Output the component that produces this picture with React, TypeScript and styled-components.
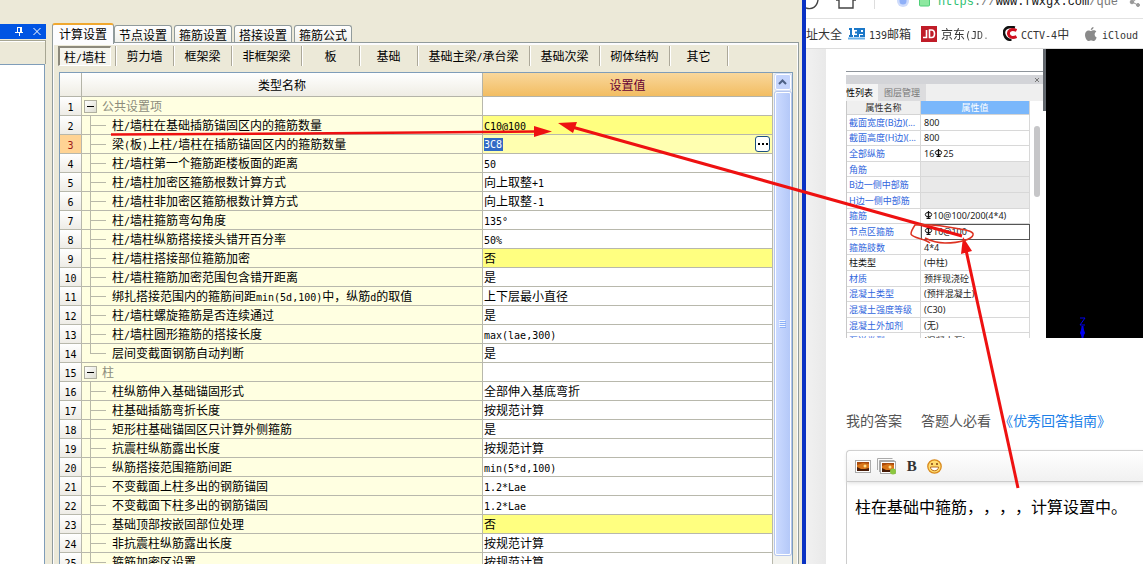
import React from "react";
import styled, { createGlobalStyle, css } from "styled-components";

const GlobalStyle = createGlobalStyle`
  * { box-sizing: border-box; }
  html, body { margin: 0; height: 100%; }
  body {
    overflow: hidden;
    background: #fff;
    color: #000;
    font: 12px/18px "Noto Sans CJK SC", sans-serif;
    text-spacing-trim: space-all;
  }
  button, input { font: inherit; color: inherit; margin: 0; padding: 0; border: 0; background: none; }
  table { border-collapse: separate; border-spacing: 0; }
  th, td { padding: 0; font-weight: 400; text-align: left; }
  svg { display: block; }
`;

const Desktop = styled.div`
  position: relative;
  display: grid;
  grid-template-columns: minmax(0, 806fr) minmax(0, 337fr);
  height: 100vh;
  overflow: hidden;
`;

/* ---------- half-width characters next to Chinese text ---------- */

const Half = styled.span`
  font-family: "DejaVu Sans Mono", monospace;
  font-size: 10px;
  line-height: 10px;
`;

const Mixed = ({ text }: { text: string }) => (
  <>
    {text.split(/([\x21-\x7e°]+)/).map((part, i) =>
      i % 2 ? <Half key={i}>{part}</Half> : part
    )}
  </>
);

/* ---------- settings window ---------- */

const SettingsWindow = styled.main`
  display: flex;
  gap: 6px;
  min-width: 0;
  overflow: hidden;
  background: #ece9d8;
  border-right: 4px solid #0a32c4;
`;

const Dock = styled.aside`
  display: flex;
  flex-direction: column;
  width: 46px;
  flex: none;
  padding-top: 24px;
`;

const DockTitle = styled.div`
  display: flex;
  align-items: center;
  justify-content: flex-end;
  gap: 10px;
  height: 15px;
  padding-right: 5px;
  background: #0054e3;
`;

const DockButton = styled.button`
  display: block;
  width: 8px;
  height: 9px;
`;

const DockBar = styled.div`
  height: 24px;
  margin-top: 1px;
  border: solid #a7a693;
  border-width: 1px 1px 0 0;
  box-shadow: inset 0 1px 0 #fff;
`;

const DockBody = styled.div`
  flex: 1;
  margin-right: 1px;
  background: #fff;
  border: solid #7f9db9;
  border-width: 1px 1px 0 0;
`;

const Main = styled.section`
  display: flex;
  flex-direction: column;
  flex: 1;
  min-width: 0;
  padding: 23px 3px 0 0;
`;

const TabRow = styled.div`
  display: flex;
  align-items: flex-end;
  gap: 2px;
  height: 19px;
`;

const Tab = styled.button<{ $active?: boolean }>`
  position: relative;
  width: 58px;
  height: 17px;
  line-height: 17px;
  white-space: nowrap;
  border: 1px solid #919b9c;
  border-bottom: 0;
  border-radius: 3px 3px 0 0;
  background: linear-gradient(#fff, #f0f0ea);
  ${(p) =>
    p.$active &&
    css`
      width: 62px;
      height: 21px;
      margin: 0 -2px -2px 0;
      padding-bottom: 4px;
      z-index: 1;
      border-top: 2px solid #f0a830;
      background: #fcfcfe;
    `}
`;

const Panel = styled.div`
  display: flex;
  flex-direction: column;
  flex: 1;
  min-height: 0;
  padding: 3px 5px 0;
  border: 1px solid #919b9c;
  border-bottom: 0;
  box-shadow: inset 1px 2px 0 #fcfcfe, inset -1px 0 0 #fcfcfe;
`;

const SubTabs = styled.div`
  display: flex;
  height: 20px;
  margin-bottom: 6px;
`;

const SubTab = styled.button<{ $w: number; $pressed?: boolean }>`
  width: ${(p) => p.$w}px;
  height: 20px;
  line-height: 20px;
  white-space: nowrap;
  border-right: 1px solid #aca899;
  box-shadow: 1px 0 0 #fff;
  ${(p) =>
    p.$pressed &&
    css`
      border: 1px solid #fff;
      border-top: 2px solid #8c897c;
      border-left: 2px solid #8c897c;
      line-height: 18px;
      background: #f6f5ee;
      box-shadow: none;
    `}
`;

const SubTabDivider = styled.span`
  width: 5px;
  border-right: 1px solid #aca899;
  box-shadow: 1px 0 0 #fff;
`;

const GridFrame = styled.div`
  display: flex;
  flex: 1;
  min-height: 0;
  overflow: hidden;
  margin: 0 0 0 1px;
  border: 1px solid #7f9db9;
  border-bottom: 0;
  background: #fff;
`;

const SettingsTable = styled.table`
  flex: 1;
  min-width: 0;
  table-layout: fixed;
  align-self: flex-start;
`;

const HeadCell = styled.th<{ $value?: boolean }>`
  height: 24px;
  text-align: center;
  border-right: 1px solid #b4b4a8;
  border-bottom: 1px solid #b4b4a8;
  background: linear-gradient(#fff, #efede4);
  ${(p) =>
    p.$value &&
    css`
      color: #660033;
      background: linear-gradient(#f9d79b, #f2bd62);
    `}
`;

const NumberCell = styled.th<{ $current?: boolean }>`
  height: 19px;
  text-align: center;
  border-right: 1px solid #b8b8ac;
  border-bottom: 1px solid #b8b8ac;
  background: linear-gradient(#fff, #eeece6);
  ${(p) =>
    p.$current &&
    css`
      color: #a01818;
      background: #ffd394;
    `}
`;

const NameCell = styled.td`
  height: 19px;
  overflow: hidden;
  white-space: nowrap;
  background: #ffffe1;
  border-right: 1px solid #b8b8ac;
  border-bottom: 1px solid #b8b8ac;
`;

const tones = { plain: "#fff", changed: "#ffff80", editing: "#ffffb0" };

const ValueCell = styled.td<{ $tone: keyof typeof tones }>`
  height: 19px;
  padding: 0 2px 0 1px;
  white-space: nowrap;
  background: ${(p) => tones[p.$tone]};
  border-right: 1px solid #b8b8ac;
  border-bottom: 1px solid #b8b8ac;
`;

const TreeItem = styled.div<{ $group?: boolean }>`
  display: flex;
  align-items: center;
  height: 18px;
  color: ${(p) => (p.$group ? "#8c8c7c" : "#000")};
`;

const Branch = styled.span<{ $last?: boolean }>`
  width: 30px;
  height: 18px;
  flex: none;
  background:
    linear-gradient(#b8b8a8, #b8b8a8) 8px 0 / 1px ${(p) => (p.$last ? "10px" : "18px")} no-repeat,
    linear-gradient(#b8b8a8, #b8b8a8) 8px 9px / 16px 1px no-repeat;
`;

const Toggle = styled.button`
  display: grid;
  place-items: center;
  width: 13px;
  height: 13px;
  margin: 0 5px 0 2px;
  border: 1px solid #b0b0a0;
  background: linear-gradient(135deg, #fff, #dcdcd0);
  &::before { content: ""; width: 7px; height: 1px; background: #000; }
`;

const Editing = styled.div`
  display: flex;
  align-items: center;
  justify-content: space-between;
  height: 18px;
`;

const EditBox = styled.input`
  width: 19px;
  height: 13px;
  font-family: "DejaVu Sans Mono", monospace;
  font-size: 10px;
  line-height: 13px;
  color: #fff;
  background: #316ac5;
`;

const MoreButton = styled.button`
  display: grid;
  place-items: center;
  width: 15px;
  height: 16px;
  border: 1px solid #1c5180;
  border-radius: 3px;
  background: #fff;
`;

const ScrollBar = styled.div`
  display: flex;
  flex-direction: column;
  align-items: center;
  gap: 2px;
  width: 19px;
  flex: none;
  padding: 1px 1px 0;
  background: #f3f3ee;
`;

const ScrollUp = styled.button`
  display: grid;
  place-items: center;
  width: 16px;
  height: 16px;
  border: 1px solid #fff;
  border-radius: 2px;
  background: #c4d4fc;
  box-shadow: 0 0 0 1px #d4dff8;
`;

const ScrollThumb = styled.div`
  display: grid;
  place-items: center;
  width: 16px;
  height: 463px;
  border: 1px solid #fff;
  border-radius: 2px;
  background: linear-gradient(90deg, #cbdaff, #b4c8f8);
  box-shadow: 0 0 0 1px #b5c6ee;
`;

const tabs = ["计算设置", "节点设置", "箍筋设置", "搭接设置", "箍筋公式"];

const subTabs: [string, number][] = [
  ["柱/墙柱", 53],
  ["剪力墙", 58],
  ["框架梁", 58],
  ["非框架梁", 70],
  ["板", 58],
  ["基础", 58],
  ["基础主梁/承台梁", 112],
  ["基础次梁", 70],
  ["砌体结构", 70],
  ["其它", 58],
];

type Row = { name: string; value?: string; group?: boolean; changed?: boolean; editing?: boolean; last?: boolean };

const rows: Row[] = [
  { name: "公共设置项", group: true },
  { name: "柱/墙柱在基础插筋锚固区内的箍筋数量", value: "C10@100", changed: true },
  { name: "梁(板)上柱/墙柱在插筋锚固区内的箍筋数量", value: "3C8", editing: true },
  { name: "柱/墙柱第一个箍筋距楼板面的距离", value: "50" },
  { name: "柱/墙柱加密区箍筋根数计算方式", value: "向上取整+1" },
  { name: "柱/墙柱非加密区箍筋根数计算方式", value: "向上取整-1" },
  { name: "柱/墙柱箍筋弯勾角度", value: "135°" },
  { name: "柱/墙柱纵筋搭接接头错开百分率", value: "50%" },
  { name: "柱/墙柱搭接部位箍筋加密", value: "否", changed: true },
  { name: "柱/墙柱箍筋加密范围包含错开距离", value: "是" },
  { name: "绑扎搭接范围内的箍筋间距min(5d,100)中，纵筋d的取值", value: "上下层最小直径" },
  { name: "柱/墙柱螺旋箍筋是否连续通过", value: "是" },
  { name: "柱/墙柱圆形箍筋的搭接长度", value: "max(lae,300)" },
  { name: "层间变截面钢筋自动判断", value: "是", last: true },
  { name: "柱", group: true },
  { name: "柱纵筋伸入基础锚固形式", value: "全部伸入基底弯折" },
  { name: "柱基础插筋弯折长度", value: "按规范计算" },
  { name: "矩形柱基础锚固区只计算外侧箍筋", value: "是" },
  { name: "抗震柱纵筋露出长度", value: "按规范计算" },
  { name: "纵筋搭接范围箍筋间距", value: "min(5*d,100)" },
  { name: "不变截面上柱多出的钢筋锚固", value: "1.2*Lae" },
  { name: "不变截面下柱多出的钢筋锚固", value: "1.2*Lae" },
  { name: "基础顶部按嵌固部位处理", value: "否", changed: true },
  { name: "非抗震柱纵筋露出长度", value: "按规范计算" },
  { name: "箍筋加密区设置", value: "按规范计算", last: true },
];

const SettingRow = ({ row, index }: { row: Row; index: number }) => (
  <tr>
    <NumberCell scope="row" $current={row.editing}>
      <Mixed text={String(index)} />
    </NumberCell>
    <NameCell>
      <TreeItem $group={row.group}>
        {row.group ? <Toggle aria-label="折叠" /> : <Branch $last={row.last} />}
        <span><Mixed text={row.name} /></span>
      </TreeItem>
    </NameCell>
    <ValueCell $tone={row.editing ? "editing" : row.changed ? "changed" : "plain"}>
      {row.editing ? (
        <Editing>
          <EditBox aria-label={row.name} defaultValue={row.value} />
          <MoreButton aria-label="更多">
            <svg width="10" height="2" viewBox="0 0 10 2" shapeRendering="crispEdges">
              <path d="M0 0h2v2H0zM4 0h2v2H4zM8 0h2v2H8z" />
            </svg>
          </MoreButton>
        </Editing>
      ) : (
        <Mixed text={row.value ?? ""} />
      )}
    </ValueCell>
  </tr>
);

/* ---------- browser ---------- */

const Browser = styled.section`
  display: flex;
  flex-direction: column;
  min-width: 0;
  overflow: hidden;
  background: #fff;
`;

const AddressBar = styled.div`
  display: flex;
  height: 19px;
  flex: none;
  overflow: hidden;
  border-bottom: 1px solid #e2e2e2;
`;

const AddressIcons = styled.svg`
  flex: none;
  width: 132px;
  height: 18px;
`;

const Url = styled.div`
  flex: 1;
  min-width: 0;
  height: 16px;
  margin-top: -6px;
  overflow: hidden;
  white-space: nowrap;
  color: #777;
  font: 12px/16px "Liberation Mono", monospace;
  b { color: #2fbf71; font-weight: 400; }
  strong { color: #111; font-weight: 400; }
`;

const Bookmarks = styled.nav`
  display: flex;
  align-items: center;
  height: 30px;
  flex: none;
  overflow: hidden;
  border-bottom: 1px solid #dcdcdc;
`;

const Bookmark = styled.a<{ $w: number; $fade?: boolean }>`
  display: flex;
  align-items: center;
  gap: 4px;
  width: ${(p) => p.$w}px;
  flex: none;
  overflow: hidden;
  white-space: nowrap;
  color: #333;
  text-decoration: none;
  ${(p) => p.$fade && css`mask-image: linear-gradient(90deg, #000 70%, transparent 92%);`}
`;

const PageArea = styled.div`
  flex: 1;
  min-height: 0;
  padding-left: 20px;
  background: linear-gradient(90deg, #f1f1f1, #e9e9e9 20px);
`;

const Page = styled.article`
  height: 100%;
  padding-left: 20px;
  background: #fff;
`;

const Shot = styled.div`
  display: flex;
  height: 289px;
  overflow: hidden;
`;

const PropertyPanel = styled.div`
  display: flex;
  flex-direction: column;
  width: 197px;
  flex: none;
  margin-top: 22px;
  border-top: 1px solid #8f959b;
  color: #222;
  font: 9px/13px "Noto Sans", "Noto Sans CJK SC", sans-serif;
`;

const PanelTitle = styled.div`
  display: flex;
  justify-content: flex-end;
  align-items: center;
  height: 9px;
  flex: none;
  margin-top: 3px;
  padding-right: 4px;
  background: #d3d4d8;
`;

const PanelTabs = styled.div`
  display: flex;
  height: 17px;
  flex: none;
  background: #efefef;
`;

const PanelTab = styled.button<{ $active?: boolean }>`
  width: ${(p) => (p.$active ? 32 : 48)}px;
  color: ${(p) => (p.$active ? "#000" : "#777")};
  background: ${(p) => (p.$active ? "#f4f4f4" : "#dcdcde")};
  text-align: left;
  padding-left: ${(p) => (p.$active ? 0 : 6)}px;
  white-space: nowrap;
`;

const PropertyBody = styled.div`
  display: flex;
  gap: 4px;
  flex: none;
`;

const PropertyTable = styled.table`
  width: 184px;
  height: 248px;
  flex: none;
  table-layout: fixed;
  border-left: 1px solid #c8c8c8;
`;

const PropHead = styled.th<{ $value?: boolean }>`
  text-align: center;
  border-right: 1px solid #d4d4d4;
  border-bottom: 1px solid #d4d4d4;
  color: ${(p) => (p.$value ? "#fff" : "#333")};
  background: ${(p) => (p.$value ? "#7ab7fb" : "#efefef")};
`;

const PropName = styled.td<{ $plain?: boolean }>`
  padding-left: 2px;
  white-space: nowrap;
  overflow: hidden;
  color: ${(p) => (p.$plain ? "#111" : "#2f66dd")};
  border-right: 1px solid #d8d8d8;
  border-bottom: 1px solid #d8d8d8;
`;

const PropValue = styled.td<{ $empty?: boolean; $selected?: boolean }>`
  padding-left: 3px;
  white-space: nowrap;
  background: ${(p) => (p.$empty ? "#e9e9e9" : "#fff")};
  border-right: 1px solid #d8d8d8;
  border-bottom: 1px solid #d8d8d8;
  ${(p) => p.$selected && css`outline: 1px solid #555; outline-offset: -1px;`}
`;

const PropScroll = styled.div`
  width: 6px;
  height: 71px;
  margin-top: 25px;
  border-radius: 3px;
  background: #c6c6c8;
`;

const Edge = styled.div`
  width: 3px;
  height: 62px;
  flex: none;
  background: #62676d;
`;

const Viewport = styled.div`
  display: flex;
  align-items: flex-end;
  flex: 1;
  padding-left: 30px;
  background: #000;
`;

const AnswerLinks = styled.div`
  display: flex;
  height: 22px;
  margin-top: 71px;
  color: #555;
  font-size: 14px;
  line-height: 22px;
  white-space: nowrap;
  span { margin-right: 19px; }
  span + span { margin-right: 8px; }
  a { color: #2080e8; text-decoration: none; }
`;

const Editor = styled.div`
  margin-top: 19px;
  height: 160px;
  border: 1px solid #ccc;
  border-right: 0;
  border-radius: 4px 0 0 0;
`;

const Toolbar = styled.div`
  display: flex;
  align-items: center;
  gap: 6px;
  height: 31px;
  padding-left: 8px;
  background: linear-gradient(#fff, #f1f1f1);
  border-bottom: 1px solid #ccc;
  border-radius: 4px 0 0 0;
  box-shadow: 0 1px 4px #ddd;
`;

const ToolButton = styled.button`
  display: grid;
  place-items: center;
  min-width: 16px;
  height: 20px;
  color: #333;
  font: bold 15px/20px "Liberation Serif", serif;
`;

const Answer = styled.textarea`
  display: block;
  width: 100%;
  height: 100px;
  padding: 12px 0 0 8px;
  border: 0;
  outline: 0;
  resize: none;
  overflow: hidden;
  background: none;
  font: 16px/24px "Noto Sans CJK SC", sans-serif;
  text-spacing-trim: space-all;
`;

const Annotations = styled.svg`
  position: absolute;
  top: 0;
  left: 0;
  width: 100%;
  height: 564px;
  pointer-events: none;
`;

const Rebar = styled.svg`
  display: inline-block;
  width: 9px;
  height: 8px;
  vertical-align: 0;
`;

const RebarMark = () => (
  <Rebar viewBox="0 0 9 8" fill="none" stroke="#111">
    <ellipse cx="4.5" cy="3.6" rx="3.2" ry="2.2" />
    <path d="M4.5 0v7M2.5 7.3h4" strokeWidth="1.3" />
  </Rebar>
);

type Prop = { name: string; value?: string; mark?: string; plain?: boolean; selected?: boolean };

const columnProps: Prop[] = [
  { name: "截面宽度(B边)(...", value: "800" },
  { name: "截面高度(H边)(...", value: "800" },
  { name: "全部纵筋", mark: "16", value: "25" },
  { name: "角筋" },
  { name: "B边一侧中部筋" },
  { name: "H边一侧中部筋" },
  { name: "箍筋", mark: "", value: "10@100/200(4*4)" },
  { name: "节点区箍筋", mark: "", value: "10@100", selected: true },
  { name: "箍筋肢数", value: "4*4" },
  { name: "柱类型", value: "(中柱)", plain: true },
  { name: "材质", value: "预拌现浇砼" },
  { name: "混凝土类型", value: "(预拌混凝土)" },
  { name: "混凝土强度等级", value: "(C30)" },
  { name: "混凝土外加剂", value: "(无)" },
  { name: "泵送类型", value: "(混凝土泵)" },
];

const Photo = () => (
  <>
    <rect x="0.5" y="0.5" width="15" height="12" fill="#fff" stroke="#aaa" />
    <rect x="2" y="2" width="12" height="9" fill="#d9761a" />
    <path d="M2 2h12v2L8 3 2 5z" fill="#a84a0c" />
    <path d="M2 7l4 2 4 0 4-1v3H2z" fill="#4a1d08" />
    <circle cx="10" cy="6" r="1.5" fill="#ffe08a" />
  </>
);

export default function App() {
  return (
    <>
      <GlobalStyle />
      <Desktop>
        <SettingsWindow>
          <Dock>
            <DockTitle>
              <DockButton aria-label="固定">
                <svg width="8" height="9" viewBox="0 0 8 9" fill="none" stroke="#fff" shapeRendering="crispEdges">
                  <path d="M2.5 0v5M2 .5h4M5 0v5M6 0v5M0 5.5h8M4 6v3" />
                </svg>
              </DockButton>
              <DockButton aria-label="关闭">
                <svg width="8" height="9" viewBox="0 0 8 9" stroke="#fff">
                  <path d="M.5 1l7 7M7.5 1l-7 7" />
                </svg>
              </DockButton>
            </DockTitle>
            <DockBar />
            <DockBody />
          </Dock>
          <Main>
            <TabRow>
              {tabs.map((t, i) => (
                <Tab key={t} $active={i === 0}>{t}</Tab>
              ))}
            </TabRow>
            <Panel>
              <SubTabs>
                {subTabs.map(([label, w], i) => (
                  <React.Fragment key={label}>
                    <SubTab $w={w} $pressed={i === 0}>
                      <Mixed text={label} />
                    </SubTab>
                    {i === 0 && <SubTabDivider />}
                  </React.Fragment>
                ))}
              </SubTabs>
              <GridFrame>
                <SettingsTable>
                  <colgroup>
                    <col width="22" />
                    <col width="401" />
                    <col />
                  </colgroup>
                  <thead>
                    <tr>
                      <HeadCell />
                      <HeadCell scope="col">类型名称</HeadCell>
                      <HeadCell scope="col" $value>设置值</HeadCell>
                    </tr>
                  </thead>
                  <tbody>
                    {rows.map((row, i) => (
                      <SettingRow key={i} row={row} index={i + 1} />
                    ))}
                  </tbody>
                </SettingsTable>
                <ScrollBar>
                  <ScrollUp aria-label="向上滚动">
                    <svg width="9" height="6" viewBox="0 0 9 6" fill="none" stroke="#4d6185" strokeWidth="2">
                      <path d="M1 5l3.5-3.5L8 5" />
                    </svg>
                  </ScrollUp>
                  <ScrollThumb>
                    <svg width="7" height="8" viewBox="0 0 7 8" shapeRendering="crispEdges">
                      <path d="M0 .5h6M0 2.5h6M0 4.5h6M0 6.5h6" stroke="#eef4fe" />
                      <path d="M1 1.5h6M1 3.5h6M1 5.5h6M1 7.5h6" stroke="#8cb0f8" />
                    </svg>
                  </ScrollThumb>
                </ScrollBar>
              </GridFrame>
            </Panel>
          </Main>
        </SettingsWindow>

        <Browser>
          <AddressBar>
            <AddressIcons viewBox="0 0 132 18" fill="none">
              <path d="M0 8c6 2 11-1 12-8" stroke="#444" strokeWidth="1.4" />
              <path d="M30 0h3v8h14V0h3" stroke="#444" strokeWidth="1.4" />
              <path d="M68.5 0v9" stroke="#ddd" />
              <circle cx="97" cy="1" r="6" fill="#cfdcfb" />
              <circle cx="97" cy="1" r="3.5" fill="#8fb0f8" />
              <rect x="113.5" y="-4" width="10" height="10" rx="1" fill="#8de8a0" stroke="#4fcf78" />
            </AddressIcons>
            <Url>
              <b>https</b>://<strong>www.fwxgx.com</strong>/que
            </Url>
            <svg width="14" height="18" viewBox="0 0 14 18" fill="#999" stroke="#999">
              <path d="M9 -2L3 2l6 3" fill="none" />
              <circle cx="3" cy="2" r="1.8" />
              <circle cx="9" cy="5" r="1.5" />
            </svg>
          </AddressBar>
          <Bookmarks>
            <Bookmark href="#" $w={42}>址大全</Bookmark>
            <Bookmark href="#" $w={73}>
              <svg width="17" height="13" viewBox="0 0 17 13">
                <path
                  d="M1 2h2v7M1 9h4M6 2h4v7H6M7 5.5h3M16 6h-4V2h4v7h-4"
                  fill="none"
                  stroke="#1b78c8"
                  strokeWidth="2"
                />
                <path d="M0 11.5h17" stroke="#68b0e8" strokeWidth="2" />
              </svg>
              <span><Mixed text="139邮箱" /></span>
            </Bookmark>
            <Bookmark href="#" $w={82} $fade>
              <svg width="16" height="16" viewBox="0 0 16 16">
                <rect width="16" height="16" fill="#c01c28" />
                <path d="M2 11.5h3.500V4M8.500 4v7.500h2c4 0 4-7.500 0-7.500z" fill="none" stroke="#fff" strokeWidth="1.6" />
              </svg>
              <span><Mixed text="京东(JD." /></span>
            </Bookmark>
            <Bookmark href="#" $w={81}>
              <svg width="14" height="15" viewBox="0 0 14 15" fill="none">
                <path d="M12 1.5C2-1 0 5 1.5 9c1 3 4 5 7 5" stroke="#111" strokeWidth="2.5" />
                <path d="M13.5 4.500C8 2 5 5 5.500 8c.5 3 4 4.500 8 2.500" stroke="#d01020" strokeWidth="3" />
              </svg>
              <span><Mixed text="CCTV-4中" /></span>
            </Bookmark>
            <Bookmark href="#" $w={58}>
              <svg width="14" height="14" viewBox="0 0 14 14" fill="#8a8a8a">
                <path d="M9.5 0c.1 1.6-1 3-2.7 3C6.700 1.500 8 .2 9.500 0z" />
                <path d="M7 4c.8 0 1.500-.7 2.700-.7 1 0 2 .5 2.600 1.400-2.400 1.400-2 4.700.4 5.700C12 12.300 11 14 9.700 14c-1 0-1.400-.6-2.600-.6s-1.700.6-2.600.6C2.800 14 1 10.600 1 8c0-2.800 1.700-4.500 3.500-4.500C5.600 3.500 6.300 4 7 4z" />
              </svg>
              <span><Mixed text="iCloud" /></span>
            </Bookmark>
          </Bookmarks>
          <PageArea>
            <Page>
              <Shot>
                <PropertyPanel>
                  <PanelTitle>
                    <svg width="4" height="4" viewBox="0 0 4 4" stroke="#777">
                      <path d="M0 0l4 4M4 0L0 4" />
                    </svg>
                  </PanelTitle>
                  <PanelTabs>
                    <PanelTab $active>性列表</PanelTab>
                    <PanelTab>图层管理</PanelTab>
                  </PanelTabs>
                  <PropertyBody>
                    <PropertyTable>
                      <colgroup>
                        <col width="74" />
                        <col />
                      </colgroup>
                      <thead>
                        <tr>
                          <PropHead scope="col">属性名称</PropHead>
                          <PropHead scope="col" $value>属性值</PropHead>
                        </tr>
                      </thead>
                      <tbody>
                        {columnProps.map((p) => (
                          <tr key={p.name}>
                            <PropName $plain={p.plain}>{p.name}</PropName>
                            <PropValue $empty={!p.value} $selected={p.selected}>
                              {p.mark}
                              {p.mark !== undefined && <RebarMark />}
                              {p.value}
                            </PropValue>
                          </tr>
                        ))}
                      </tbody>
                    </PropertyTable>
                    <PropScroll />
                  </PropertyBody>
                </PropertyPanel>
                <Edge />
                <Viewport>
                  <svg width="14" height="24" viewBox="0 0 14 24" fill="none" stroke="#0000f0">
                    <path d="M4 4h5L4 11h5" />
                    <path d="M6.5 12v12" strokeWidth="2" />
                    <path d="M6.5 13l2 6-2 4-2-4z" fill="#0000f0" />
                  </svg>
                </Viewport>
              </Shot>
              <AnswerLinks>
                <span>我的答案</span>
                <span>答题人必看</span>
                <a href="#">《优秀回答指南》</a>
              </AnswerLinks>
              <Editor>
                <Toolbar>
                  <ToolButton aria-label="图片">
                    <svg width="16" height="13" viewBox="0 0 16 13"><Photo /></svg>
                  </ToolButton>
                  <ToolButton aria-label="多图上传">
                    <svg width="20" height="17" viewBox="0 0 20 17">
                      <path d="M.5 12V.5h15M2.5 14V2.5h15" fill="none" stroke="#aaa" />
                      <g transform="translate(3 3)"><Photo /></g>
                      <circle cx="16" cy="13.5" r="3" fill="#8cc63f" />
                    </svg>
                  </ToolButton>
                  <ToolButton aria-label="加粗">&nbsp;B&nbsp;</ToolButton>
                  <ToolButton aria-label="表情">
                    <svg width="15" height="15" viewBox="0 0 15 15">
                      <circle cx="7.5" cy="7.5" r="6.7" fill="#ffdc6e" stroke="#d98a1e" strokeWidth="1.3" />
                      <path d="M3.5 8h8c0 5-8 5-8 0z" fill="#fff" stroke="#b86a18" />
                      <circle cx="5" cy="5" r="1" fill="#804010" />
                      <circle cx="10" cy="5" r="1" fill="#804010" />
                    </svg>
                  </ToolButton>
                </Toolbar>
                <Answer aria-label="回答内容" defaultValue="柱在基础中箍筋，，，，计算设置中。" />
              </Editor>
            </Page>
          </PageArea>
        </Browser>

        <Annotations viewBox="0 0 1143 564" preserveAspectRatio="none" fill="none" stroke="#ee1111" strokeWidth="3">
          <path d="M111 134.5L300 133.5 536 131.5" strokeWidth="2.5" />
          <path d="M552 131.5L534 126v11z" fill="#ee1111" stroke="none" />
          <path d="M962 236L572 127" />
          <path d="M558 123l19-1-4 11z" fill="#ee1111" stroke="none" />
          <path d="M1018 488L966 250" />
          <path d="M963 237l9 14-11 3z" fill="#ee1111" stroke="none" />
          <path d="M930 243C926 239 912 238 911 234c0-3 2-6 4-9 12-1 30 1 45 4 8 1 14 3 13 6-1 4-12 8-28 8-8 0-14-2-20-5" strokeWidth="1.5" stroke="#dd3322" />
        </Annotations>
      </Desktop>
    </>
  );
}
